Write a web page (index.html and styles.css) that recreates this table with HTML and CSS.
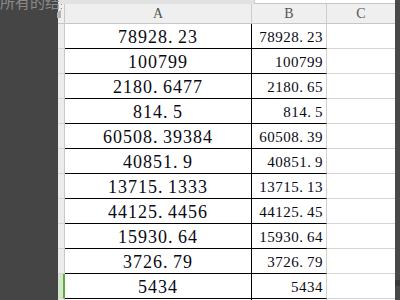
FILE: index.html
```html
<!DOCTYPE html>
<html>
<head>
<meta charset="utf-8">
<link rel="stylesheet" href="styles.css">
</head>
<body>
<div class="app">
  <div class="side-left"></div>
  <div class="sheet">
    <div class="topbar"><div class="formula"></div></div>
    <div class="grid">
      <div class="rh hdr"></div>
      <div class="ch">A</div>
      <div class="ch">B</div>
      <div class="ch last">C</div>

      <div class="rh"></div><div class="ca">78928<span class="dot">.</span>23</div><div class="cb">78928<span class="dot">.</span>23</div><div class="cc"></div>
      <div class="rh"></div><div class="ca">100799</div><div class="cb">100799</div><div class="cc"></div>
      <div class="rh"></div><div class="ca">2180<span class="dot">.</span>6477</div><div class="cb">2180<span class="dot">.</span>65</div><div class="cc"></div>
      <div class="rh"></div><div class="ca">814<span class="dot">.</span>5</div><div class="cb">814<span class="dot">.</span>5</div><div class="cc"></div>
      <div class="rh"></div><div class="ca">60508<span class="dot">.</span>39384</div><div class="cb">60508<span class="dot">.</span>39</div><div class="cc"></div>
      <div class="rh"></div><div class="ca">40851<span class="dot">.</span>9</div><div class="cb">40851<span class="dot">.</span>9</div><div class="cc"></div>
      <div class="rh"></div><div class="ca">13715<span class="dot">.</span>1333</div><div class="cb">13715<span class="dot">.</span>13</div><div class="cc"></div>
      <div class="rh"></div><div class="ca">44125<span class="dot">.</span>4456</div><div class="cb">44125<span class="dot">.</span>45</div><div class="cc"></div>
      <div class="rh"></div><div class="ca">15930<span class="dot">.</span>64</div><div class="cb">15930<span class="dot">.</span>64</div><div class="cc"></div>
      <div class="rh"></div><div class="ca">3726<span class="dot">.</span>79</div><div class="cb">3726<span class="dot">.</span>79</div><div class="cc"></div>
      <div class="rh sel"></div><div class="ca">5434</div><div class="cb">5434</div><div class="cc"></div>
      <div class="rh"></div><div class="ca"></div><div class="cb"></div><div class="cc"></div>
    </div>
  </div>
  <div class="side-right"><div class="thumb"></div></div>
</div>
<div class="ghost">所有的结果</div>
<div class="tab-mark"></div>
</body>
</html>
```
FILE: styles.css
```css
html, body {
  margin: 0;
  padding: 0;
  width: 400px;
  height: 300px;
  overflow: hidden;
  background: #ffffff;
}
.app {
  display: flex;
  width: 400px;
  height: 300px;
}
.side-left {
  width: 58px;
  flex: none;
  background: #454545;
}
.side-right {
  width: 5px;
  flex: none;
  background: #484848;
  display: flex;
  flex-direction: column;
  justify-content: flex-end;
}
.thumb {
  height: 6px;
  margin-bottom: 14px;
  background: #3a3a3a;
}
.sheet {
  width: 337px;
  flex: none;
  display: flex;
  flex-direction: column;
}
.topbar {
  height: 4px;
  background: #e2e2e2;
  display: flex;
  justify-content: flex-end;
}
.formula {
  width: 140px;
  height: 3px;
  background: #ffffff;
  border-left: 1px solid #cfcfcf;
  border-bottom: 1px solid #c4c4c4;
}
.grid {
  display: grid;
  grid-template-columns: 7px 187px 75px 68px;
  grid-template-rows: 20px;
  grid-auto-rows: 25px;
}
.grid > div {
  box-sizing: border-box;
}
.rh {
  background: #ececec;
  border-right: 1px solid #c9c9c9;
  border-bottom: 1px solid #d6d6d6;
}
.rh.hdr {
  background: #efefef;
  border-bottom: 1px solid #c6c6c6;
}
.rh.sel {
  background: #d6e6cd;
  border-right: 2px solid #5cae3c;
}
.ch {
  background: #efefef;
  border-right: 1px solid #cccccc;
  border-bottom: 1px solid #c6c6c6;
  color: #555555;
  font-family: "Liberation Serif", serif;
  font-size: 14px;
  display: flex;
  align-items: center;
  justify-content: center;
  padding-top: 1px;
}
.ch.last {
  border-right: none;
}
.ca {
  border-right: 1px solid #000000;
  border-bottom: 1px solid #000000;
  font-family: "Liberation Serif", serif;
  font-size: 18px;
  letter-spacing: 1px;
  color: #0a0a14;
  display: flex;
  align-items: center;
  justify-content: center;
  padding-top: 3px;
}
.ca .dot {
  letter-spacing: 5.5px;
}
.cb {
  border-right: 1px solid #d0d0d0;
  border-bottom: 1px solid #000000;
  font-family: "Liberation Serif", serif;
  font-size: 15px;
  letter-spacing: 0.5px;
  color: #0a0a14;
  display: flex;
  align-items: center;
  justify-content: flex-end;
  padding-right: 3px;
  padding-top: 3px;
}
.cb .dot {
  letter-spacing: 4px;
}
.cc {
  border-bottom: 1px solid #d4d4d4;
}
.ghost {
  position: absolute;
  left: 0;
  top: -8px;
  font-family: "Noto Sans CJK SC", sans-serif;
  font-size: 15px;
  line-height: 20px;
  color: #8a8a8a;
  white-space: nowrap;
  width: 62px;
  overflow: hidden;
}
.tab-mark {
  position: absolute;
  left: 57px;
  top: 10px;
  width: 4px;
  height: 8px;
  background: #b3b3b3;
  clip-path: polygon(0 30%, 100% 0, 100% 100%, 0 100%);
}
```
